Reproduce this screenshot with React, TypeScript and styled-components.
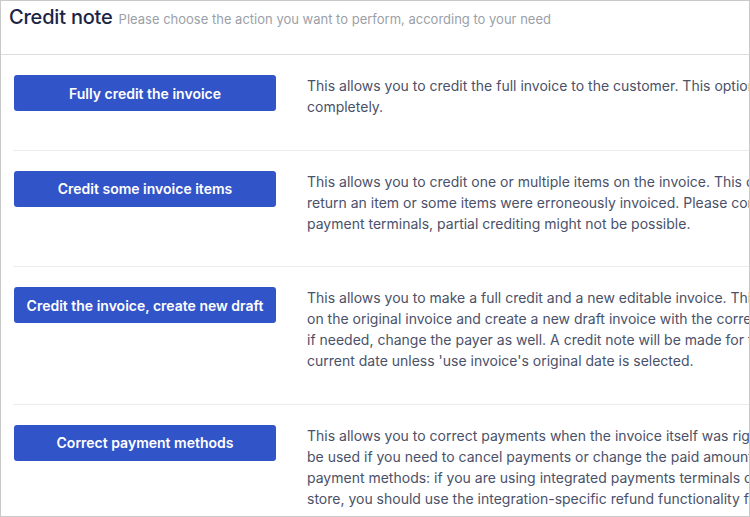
import React from "react";
import styled, { createGlobalStyle } from "styled-components";

const GlobalStyle = createGlobalStyle`
  html, body {
    margin: 0;
    padding: 0;
    background: #fff;
  }
  body {
    font-family: Inter, "Noto Sans", sans-serif;
  }
`;

const Frame = styled.div`
  box-sizing: border-box;
  width: 750px;
  height: 517px;
  border: 1px solid #c9c9c9;
  overflow: hidden;
  background: #fff;
`;

const Header = styled.div`
  box-sizing: border-box;
  height: 54px;
  padding: 4px 8px 0;
  border-bottom: 1px solid #dcdcdc;
  white-space: nowrap;
`;

const Title = styled.span`
  font-size: 20px;
  font-weight: 500;
  color: #1b2445;
  letter-spacing: -0.01em;
`;

const Subtitle = styled.span`
  margin-left: 6px;
  font-size: 13px;
  color: #9b9fa8;
`;

const List = styled.div`
  padding-left: 12px;
`;

const Row = styled.div`
  display: grid;
  grid-template-columns: 263px 1fr;
  column-gap: 31px;
  align-items: start;
  padding: 20px 0 32.5px;
  border-bottom: 1px solid #ececec;
`;

const ActionButton = styled.button`
  height: 36px;
  margin-left: 1px;
  padding: 0 10px;
  border: none;
  border-radius: 3px;
  background: #3254c9;
  color: #fff;
  font-family: Inter, "Noto Sans", sans-serif;
  font-size: 14px;
  font-weight: 600;
  cursor: pointer;
`;

const Description = styled.div`
  font-size: 14px;
  line-height: 21px;
  color: #4a5169;
  white-space: nowrap;
`;

const Line = styled.div``;

const actions: Array<{ label: string; lines: string[] }> = [
  {
    label: "Fully credit the invoice",
    lines: [
      "This allows you to credit the full invoice to the customer. This option will void the invoice",
      "completely.",
    ],
  },
  {
    label: "Credit some invoice items",
    lines: [
      "This allows you to credit one or multiple items on the invoice. This can be used if the customer",
      "return an item or some items were erroneously invoiced. Please consider that when using integrated",
      "payment terminals, partial crediting might not be possible.",
    ],
  },
  {
    label: "Credit the invoice, create new draft",
    lines: [
      "This allows you to make a full credit and a new editable invoice. This will create a credit note",
      "on the original invoice and create a new draft invoice with the correct information. You can also,",
      "if needed, change the payer as well. A credit note will be made for the",
      "current date unless 'use invoice's original date is selected.",
    ],
  },
  {
    label: "Correct payment methods",
    lines: [
      "This allows you to correct payments when the invoice itself was right. This should",
      "be used if you need to cancel payments or change the paid amounts. Be careful with integrated",
      "payment methods: if you are using integrated payments terminals or an online",
      "store, you should use the integration-specific refund functionality for this.",
    ],
  },
];

const App: React.FC = () => {
  return (
    <>
      <GlobalStyle />
      <Frame>
        <Header>
          <Title>Credit note</Title>
          <Subtitle>Please choose the action you want to perform, according to your need</Subtitle>
        </Header>
        <List>
          {actions.map((a) => (
            <Row key={a.label}>
              <ActionButton>{a.label}</ActionButton>
              <Description>
                {a.lines.map((l) => (
                  <Line key={l}>{l}</Line>
                ))}
              </Description>
            </Row>
          ))}
        </List>
      </Frame>
    </>
  );
};

export default App;
